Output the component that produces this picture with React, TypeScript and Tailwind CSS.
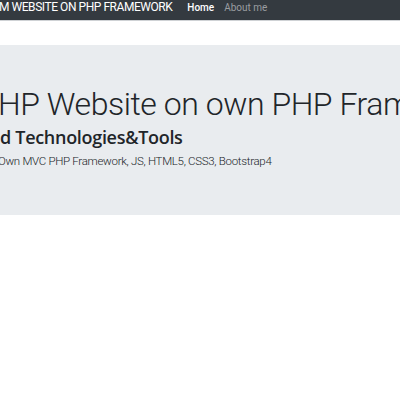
import React from "react";

export default function App() {
  return (
    <div className="w-[400px] h-[400px] overflow-hidden bg-white" style={{ fontFamily: 'Roboto, "Open Sans", sans-serif' }}>
      <nav className="h-[21px] bg-[#343a40] flex items-start whitespace-nowrap border-b border-[#cfd2d5]">
        <span className="text-[12px] leading-[15px] text-white -ml-[1px] tracking-[-0.45px]">M WEBSITE ON PHP FRAMEWORK</span>
        <span className="ml-[15px] text-[10px] leading-[15px] text-white font-medium">Home</span>
        <span className="ml-[10px] text-[10px] leading-[15px] text-[#9a9da0]">About me</span>
      </nav>
      <div className="mt-[24px] h-[170px] bg-[#e9ecef] text-[#212529] whitespace-nowrap pt-[39px]">
        <div className="text-[32px] font-light leading-[40px] -ml-[2px] tracking-[-0.45px]">HP Website on own PHP Framework</div>
        <div className="text-[18px] font-semibold leading-[22px] mt-[2px] tracking-[-0.3px]" style={{ fontFamily: '"Open Sans", sans-serif' }}>d Technologies&amp;Tools</div>
        <div className="text-[11.5px] font-light leading-[16px] mt-[5px] -ml-[2px] tracking-[-0.3px]">Own MVC PHP Framework, JS, HTML5, CSS3, Bootstrap4</div>
      </div>
    </div>
  );
}
